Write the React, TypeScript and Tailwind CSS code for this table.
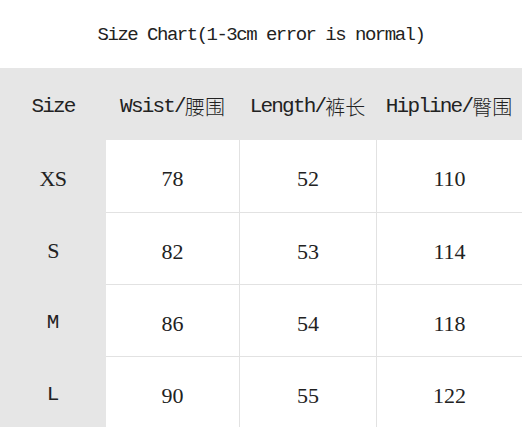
import React from "react";

const mono = { fontFamily: '"Liberation Mono", "Noto Sans CJK SC", monospace' };
const cjk = { fontFamily: '"Noto Sans CJK SC", sans-serif' };

function Head({ latin, zh }: { latin: string; zh?: string }) {
  return (
    <div className="flex items-center justify-center pt-[6px] text-[#222]">
      <span className="text-[21px] tracking-[-1.8px]" style={mono}>
        {latin}
      </span>
      {zh && (
        <span className="text-[20px] font-light" style={cjk}>
          {zh}
        </span>
      )}
    </div>
  );
}

const rows = [
  { s: "XS", serif: true, v: ["78", "52", "110"] },
  { s: "S", serif: true, v: ["82", "53", "114"] },
  { s: "M", serif: false, v: ["86", "54", "118"] },
  { s: "L", serif: false, v: ["90", "55", "122"] },
];

export default function App() {
  return (
    <div className="w-[522px] h-[427px] overflow-hidden bg-white">
      <div className="h-[68px] flex items-center justify-center pt-[2px]">
        <span className="text-[19px] tracking-[-1.5px] text-[#222]" style={mono}>
          Size Chart(1-3cm error is normal)
        </span>
      </div>
      <div className="grid grid-cols-[106px_133px_137px_146px]">
        <div className="contents">
          <div className="h-[72px] bg-[#e6e6e6] flex items-center justify-center">
            <Head latin="Size" />
          </div>
          <div className="h-[72px] bg-[#e6e6e6] flex items-center justify-center">
            <Head latin="Wsist/" zh="腰围" />
          </div>
          <div className="h-[72px] bg-[#e6e6e6] flex items-center justify-center">
            <Head latin="Length/" zh="裤长" />
          </div>
          <div className="h-[72px] bg-[#e6e6e6] flex items-center justify-center">
            <Head latin="Hipline/" zh="臀围" />
          </div>
        </div>
        {rows.map((r, i) => (
          <div key={r.s} className="contents">
            <div className="h-[72px] bg-[#e6e6e6] flex items-center justify-center pt-[5px] text-[#222]">
              {r.serif ? (
                <span className="text-[22px] tracking-[-0.5px]" style={{ fontFamily: '"Liberation Serif", serif' }}>
                  {r.s}
                </span>
              ) : (
                <span className="text-[21px]" style={mono}>
                  {r.s}
                </span>
              )}
            </div>
            {r.v.map((v, j) => (
              <div
                key={j}
                className={`h-[72px] bg-white flex items-center justify-center pt-[5px] text-[#222] border-[#e2e2e2] ${
                  i > 0 ? "border-t" : ""
                } ${j > 0 ? "border-l" : ""}`}
              >
                <span className="text-[22px]" style={{ fontFamily: '"Liberation Serif", serif' }}>
                  {v}
                </span>
              </div>
            ))}
          </div>
        ))}
      </div>
    </div>
  );
}
